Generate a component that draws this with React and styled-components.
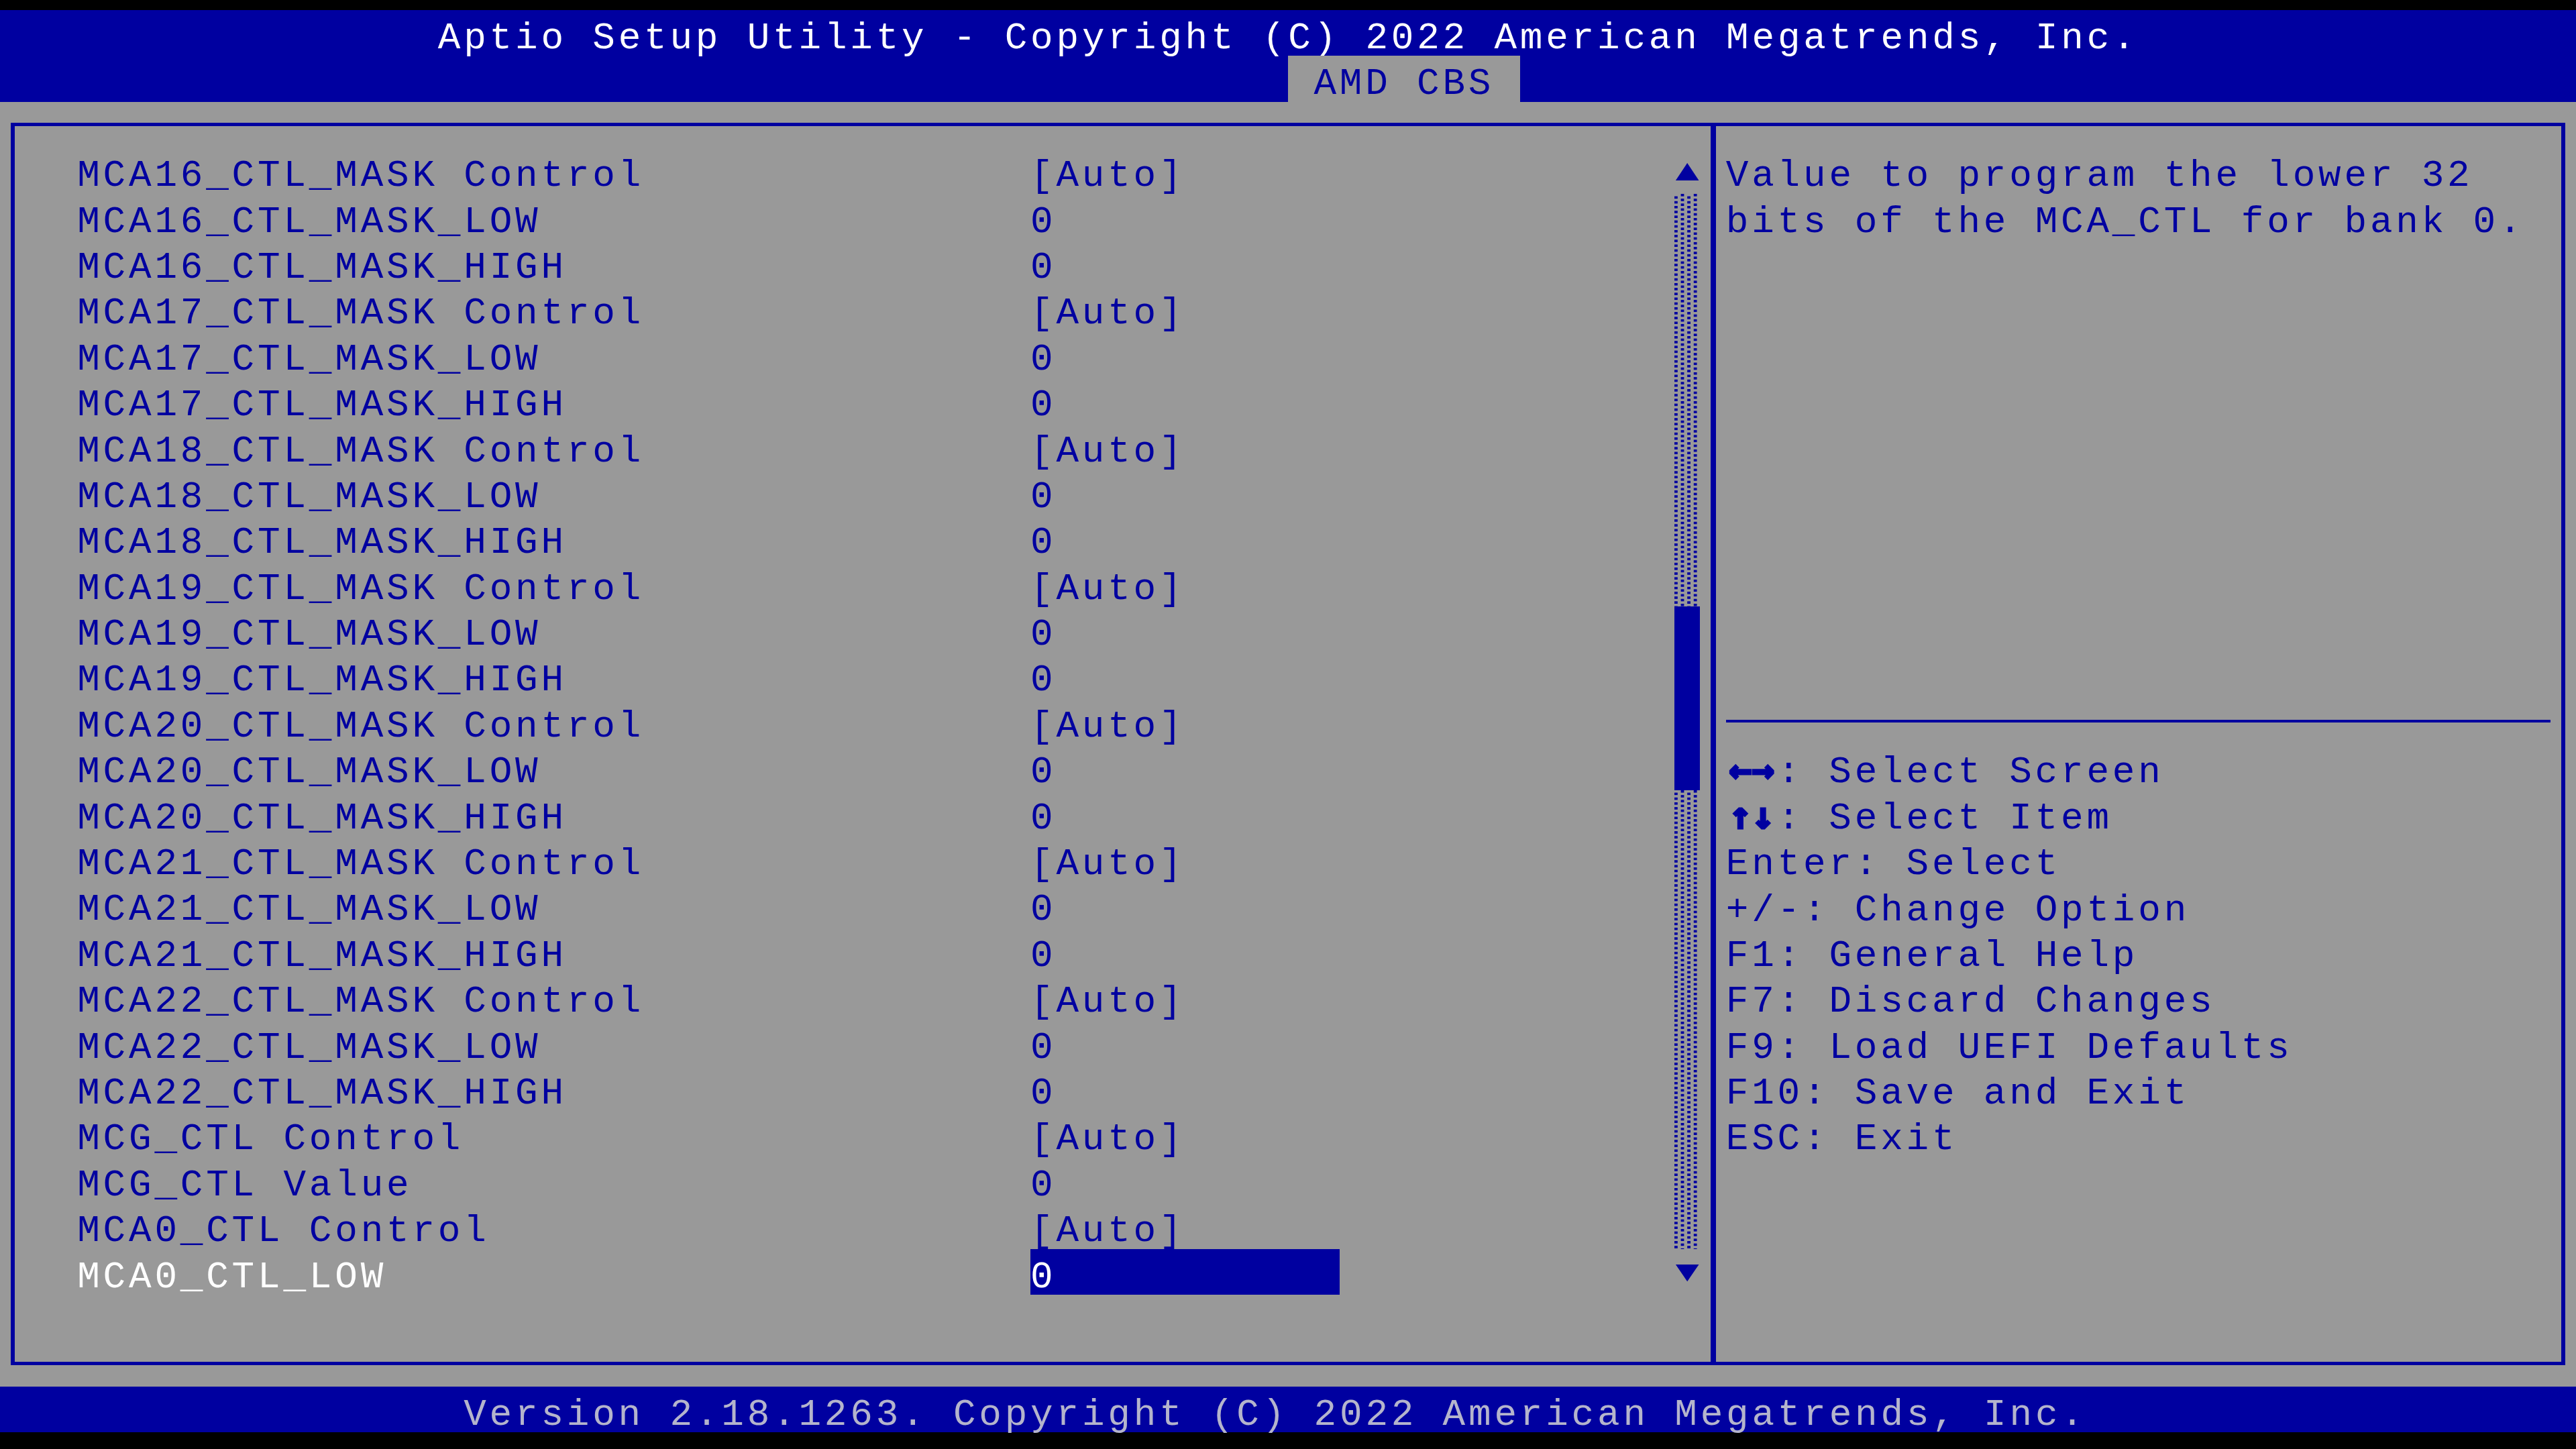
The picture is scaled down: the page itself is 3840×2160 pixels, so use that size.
import React from 'react'
import styled, { createGlobalStyle, css } from 'styled-components'

// text-mode cell: 100 columns x 31 rows on a 3840 wide screen
const C = 38.4
const R = 68.4
const HL = 5 // horizontal frame line
const VL = 6 // vertical frame line
const DV = 8 // pane divider

const blue = '#0000a0'
const gray = '#999999'

const GlobalStyle = createGlobalStyle`
  html, body {
    margin: 0;
    padding: 0;
    background: #000;
  }
`

const Screen = styled.div`
  width: 3840px;
  height: 2160px;
  box-sizing: border-box;
  padding-top: 15px;
  background: #000;
  display: flex;
  flex-direction: column;
  font-family: "Liberation Mono", "DejaVu Sans Mono", monospace;
  font-size: 56px;
  letter-spacing: 4.8px;
  white-space: pre;
`

const textLine = css`
  height: ${R}px;
  box-sizing: border-box;
  padding-top: 16px;
  line-height: ${R - 16}px;
`

const Header = styled.header`
  background: ${blue};
`

const Title = styled.div`
  ${textLine};
  padding-left: ${17 * C}px;
  color: #fff;
`

const TabBar = styled.nav`
  height: ${R}px;
  padding-left: ${50 * C}px;
  display: flex;
`

const Tab = styled.div`
  ${textLine};
  width: ${9 * C}px;
  background: ${gray};
  color: ${blue};
  text-align: center;
`

const Body = styled.main`
  height: ${28 * R}px;
  box-sizing: border-box;
  background: ${gray};
  padding: ${R / 2 - HL / 2}px ${C / 2 - VL / 2}px;
  display: flex;
`

const Frame = styled.div`
  flex: 1;
  display: flex;
  border: solid ${blue};
  border-width: ${HL}px ${VL}px;
`

const ListPane = styled.section`
  width: ${66 * C - DV / 2 - VL / 2}px;
  box-sizing: border-box;
  padding: ${R / 2 - HL / 2}px ${C / 2 - DV / 2}px 0 ${2.5 * C - VL / 2}px;
  display: flex;
`

const Items = styled.div`
  flex: 1;
  display: flex;
  flex-direction: column;
`

const Item = styled.div`
  height: ${R}px;
  display: grid;
  grid-template-columns: ${37 * C}px ${12 * C}px;
  color: ${p => (p.$selected ? '#fff' : blue)};
`

const Label = styled.span`
  ${textLine};
`

const Value = styled.span`
  ${textLine};
  ${p => p.$selected && css`
    background: ${blue};
    color: #fff;
  `}
`

const Scrollbar = styled.div`
  width: ${C}px;
  display: flex;
  flex-direction: column;
`

const ArrowCell = styled.svg`
  display: block;
  width: ${C}px;
  height: ${R}px;
  fill: ${blue};
`

const Track = styled.div`
  height: ${p => p.$rows * R}px;
  background-image:
    conic-gradient(from 270deg at 4.8px 3.6px, ${blue} 25%, transparent 0),
    conic-gradient(from 270deg at 4.8px 3.6px, ${blue} 25%, transparent 0);
  background-size: 19.2px 7.2px;
  background-position: 9.6px 0, 0 3.6px;
`

const Thumb = styled.div`
  height: ${4 * R}px;
  background: ${blue};
`

const HelpPane = styled.aside`
  flex: 1;
  display: flex;
  flex-direction: column;
  border-left: ${DV}px solid ${blue};
  padding: ${R / 2 - HL / 2}px ${C / 2 - VL / 2}px 0 ${C / 2 - DV / 2}px;
  color: ${blue};
`

const Description = styled.div`
  height: ${12 * R}px;
`

const HelpLine = styled.div`
  ${textLine};
`

const Rule = styled.div`
  height: ${R}px;
  background: linear-gradient(${blue}, ${blue}) center / 100% 4px no-repeat;
`

// arrow keys are drawn heavier than the rest of the text,
// line-height keeps their baseline on the row's baseline
const Glyph = styled.span`
  display: inline-block;
  width: ${2 * C}px;
  font-family: "DejaVu Sans Mono", "Liberation Mono", monospace;
  font-weight: bold;
  line-height: 43.4px;
  letter-spacing: 0;
  -webkit-text-stroke: 3px currentColor;
  text-align: center;
`

const Footer = styled.footer`
  ${textLine};
  padding-left: ${18 * C}px;
  background: ${blue};
  color: #b4b4cc;
`

const banks = ['16', '17', '18', '19', '20', '21', '22']

const items = [
  ...banks.flatMap(n => [
    { label: `MCA${n}_CTL_MASK Control`, value: '[Auto]' },
    { label: `MCA${n}_CTL_MASK_LOW`, value: '0' },
    { label: `MCA${n}_CTL_MASK_HIGH`, value: '0' },
  ]),
  { label: 'MCG_CTL Control', value: '[Auto]' },
  { label: 'MCG_CTL Value', value: '0' },
  { label: 'MCA0_CTL Control', value: '[Auto]' },
  { label: 'MCA0_CTL_LOW', value: '0', selected: true },
]

const keys = [
  [<Glyph key="g">←→</Glyph>, ': Select Screen'],
  [<Glyph key="g">↑↓</Glyph>, ': Select Item'],
  ['Enter: Select'],
  ['+/-: Change Option'],
  ['F1: General Help'],
  ['F7: Discard Changes'],
  ['F9: Load UEFI Defaults'],
  ['F10: Save and Exit'],
  ['ESC: Exit'],
]

const App = () => (
  <Screen>
    <GlobalStyle />
    <Header>
      <Title>Aptio Setup Utility - Copyright (C) 2022 American Megatrends, Inc.</Title>
      <TabBar>
        <Tab>AMD CBS</Tab>
      </TabBar>
    </Header>

    <Body>
      <Frame>
        <ListPane>
          <Items>
            {items.map(item => (
              <Item key={item.label} $selected={item.selected}>
                <Label>{item.label}</Label>
                <Value $selected={item.selected}>{item.value}</Value>
              </Item>
            ))}
          </Items>
          <Scrollbar>
            <ArrowCell viewBox="0 0 8 19" preserveAspectRatio="none">
              <polygon points="4,6.4 7.6,13.6 0.4,13.6" />
            </ArrowCell>
            <Track $rows={9} />
            <Thumb />
            <Track $rows={10} />
            <ArrowCell viewBox="0 0 8 19" preserveAspectRatio="none">
              <polygon points="0.4,6.4 7.6,6.4 4,13.4" />
            </ArrowCell>
          </Scrollbar>
        </ListPane>

        <HelpPane>
          <Description>
            <HelpLine>Value to program the lower 32</HelpLine>
            <HelpLine>bits of the MCA_CTL for bank 0.</HelpLine>
          </Description>
          <Rule />
          {keys.map((k, i) => (
            <HelpLine key={i}>{k}</HelpLine>
          ))}
        </HelpPane>
      </Frame>
    </Body>

    <Footer>Version 2.18.1263. Copyright (C) 2022 American Megatrends, Inc.</Footer>
  </Screen>
)

export default App
